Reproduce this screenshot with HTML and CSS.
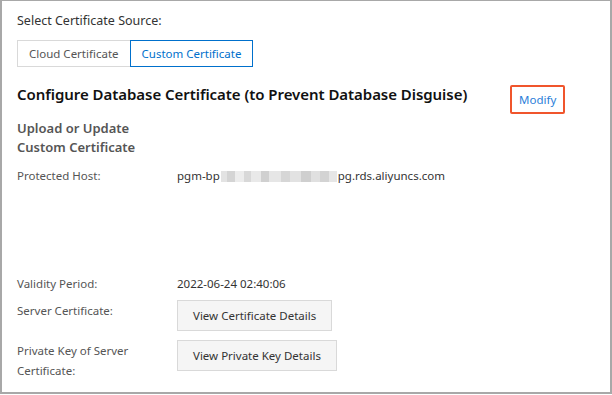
FILE: index.html
```html
<!DOCTYPE html>
<html>
<head>
<meta charset="utf-8">
<link rel="stylesheet" href="styles.css">
</head>
<body>
<div class="frame">
  <div class="source-title">Select Certificate Source:</div>
  <div class="tabs">
    <div class="tab">Cloud Certificate</div>
    <div class="tab active">Custom Certificate</div>
  </div>
  <div class="head-row">
    <div class="heading">Configure Database Certificate (to Prevent Database Disguise)</div>
    <div class="modify-wrap"><span class="modify">Modify</span></div>
  </div>
  <div class="subhead">Upload or Update<br>Custom Certificate</div>
  <div class="row host-row">
    <div class="label">Protected Host:</div>
    <div class="value">pgm-bp<span class="blur"><i style="width:6px;background:#e3e3e3"></i><i style="width:8px;background:#d4d4d4"></i><i style="width:9px;background:#ececec"></i><i style="width:7px;background:#d8d8d8"></i><i style="width:10px;background:#e9e9e9"></i><i style="width:8px;background:#d0d0d0"></i><i style="width:12px;background:#e6e6e6"></i><i style="width:9px;background:#d6d6d6"></i><i style="width:11px;background:#e2e2e2"></i><i style="width:10px;background:#cfcfcf"></i><i style="width:9px;background:#e0e0e0"></i><i style="width:9px;background:#d3d3d3"></i><i style="width:8px;background:#e6e6e6"></i></span>pg.rds.aliyuncs.com</div>
  </div>
  <div class="row validity-row">
    <div class="label">Validity Period:</div>
    <div class="value">2022-06-24 02:40:06</div>
  </div>
  <div class="row btn-row first">
    <div class="label">Server Certificate:</div>
    <div class="value"><button class="btn">View Certificate Details</button></div>
  </div>
  <div class="row btn-row second">
    <div class="label">Private Key of Server<br>Certificate:</div>
    <div class="value"><button class="btn">View Private Key Details</button></div>
  </div>
</div>
</body>
</html>
```
FILE: styles.css
```css
html, body {
  margin: 0;
  padding: 0;
  background: #fff;
}
body {
  font-family: "Noto Sans", "Open Sans", sans-serif;
  color: #333;
  width: 612px;
  height: 395px;
  overflow: hidden;
}
.frame {
  box-sizing: border-box;
  width: 612px;
  height: 394px;
  border: 1px solid #a8a8a8;
  border-left-width: 2px;
  border-right-width: 2px;
  border-bottom-width: 2px;
  padding: 10px 0 0 15px;
}
.source-title {
  font-size: 12.5px;
  color: #333;
  line-height: 20px;
}
.tabs {
  display: flex;
  margin-top: 9px;
}
.tab {
  box-sizing: border-box;
  height: 27px;
  line-height: 25px;
  border: 1px solid #d9d9d9;
  font-size: 11.5px;
  color: #555;
  padding: 0 11px;
}
.tab.active {
  border-color: #0070cc;
  color: #0070cc;
  margin-left: -1px;
}
.head-row {
  display: flex;
  align-items: flex-start;
  margin-top: 17px;
  height: 20px;
}
.heading {
  font-size: 15px;
  font-weight: 600;
  color: #111;
  line-height: 20px;
  width: 493px;
  letter-spacing: -0.05px;
}
.modify-wrap {
  margin-top: 1px;
  border: 2px solid #f0552c;
  border-radius: 2px;
  padding: 0 7px;
  height: 25px;
  display: flex;
  align-items: center;
}
.modify {
  font-size: 11.5px;
  color: #2b7ed9;
}
.subhead {
  margin-top: 15px;
  font-size: 13px;
  font-weight: 600;
  color: #555;
  line-height: 19px;
}
.row {
  display: flex;
  font-size: 11.5px;
  line-height: 20px;
}
.label {
  width: 160px;
  color: #555;
}
.value {
  color: #333;
  display: flex;
  align-items: center;
}
.host-row {
  margin-top: 9px;
}
.blur {
  display: inline-flex;
  height: 11px;
  margin: 0 1px;
}
.blur i {
  display: block;
  height: 11px;
}
.validity-row {
  margin-top: 88px;
}
.btn-row {
  align-items: flex-start;
}
.btn-row.first {
  margin-top: 6px;
}
.btn-row.second {
  margin-top: 9px;
}
.btn-row .label {
  margin-top: 1px;
}
.btn {
  font-family: inherit;
  font-size: 11.5px;
  color: #333;
  background: #f5f5f5;
  border: 1px solid #d9d9d9;
  height: 31px;
  padding: 0 15px;
  margin: 0;
  border-radius: 0;
}
```
